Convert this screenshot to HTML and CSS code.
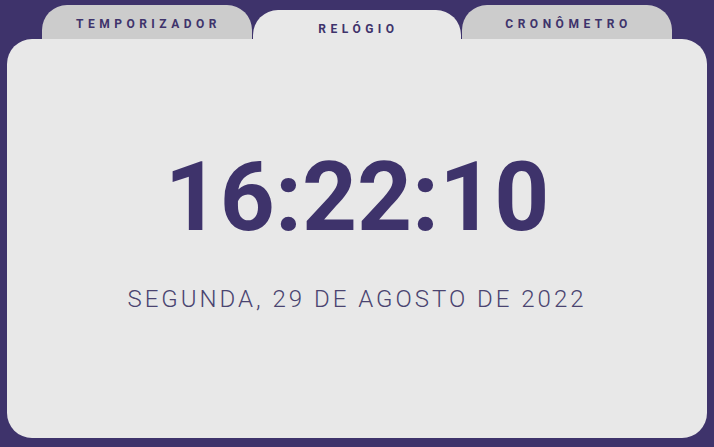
FILE: index.html
```html
<!DOCTYPE html>
<html lang="pt-BR">
<head>
<meta charset="utf-8">
<title>Relógio</title>
<link rel="stylesheet" href="styles.css">
</head>
<body>
<div class="app">
  <nav class="tabs">
    <div class="tab">TEMPORIZADOR</div>
    <div class="tab tab-active">RELÓGIO</div>
    <div class="tab">CRONÔMETRO</div>
  </nav>
  <main class="card">
    <div class="time">16:22:10</div>
    <div class="date">SEGUNDA, 29 DE AGOSTO DE 2022</div>
  </main>
</div>
</body>
</html>
```
FILE: styles.css
```css
html, body {
  margin: 0;
  padding: 0;
}
body {
  background: #3e336b;
  width: 714px;
  height: 447px;
  overflow: hidden;
  font-family: Roboto, "Liberation Sans", sans-serif;
}
.app {
  padding: 5px 7px 0 7px;
}
.tabs {
  display: flex;
  justify-content: center;
  height: 34px;
}
.tab {
  width: 210px;
  box-sizing: border-box;
  background: #cccccc;
  border-radius: 25px 25px 0 0;
  color: #3e336b;
  font-size: 12px;
  font-weight: 700;
  line-height: 12px;
  letter-spacing: 4.5px;
  text-align: center;
  padding-top: 12.5px;
  padding-left: 3px;
}
.tab-active {
  background: #e8e8e8;
  margin-top: 5px;
  width: 208px;
  margin-left: 1px;
  margin-right: 1px;
}
.card {
  background: #e8e8e8;
  height: 399px;
  border-radius: 25px;
  box-sizing: border-box;
  padding-top: 110px;
  display: flex;
  flex-direction: column;
  align-items: center;
}
.time {
  font-size: 96px;
  font-weight: 700;
  line-height: 96px;
  color: #3e336b;
}
.date {
  margin-top: 42px;
  font-size: 24px;
  font-weight: 300;
  line-height: 24px;
  letter-spacing: 3px;
  color: #4a4470;
}
```
